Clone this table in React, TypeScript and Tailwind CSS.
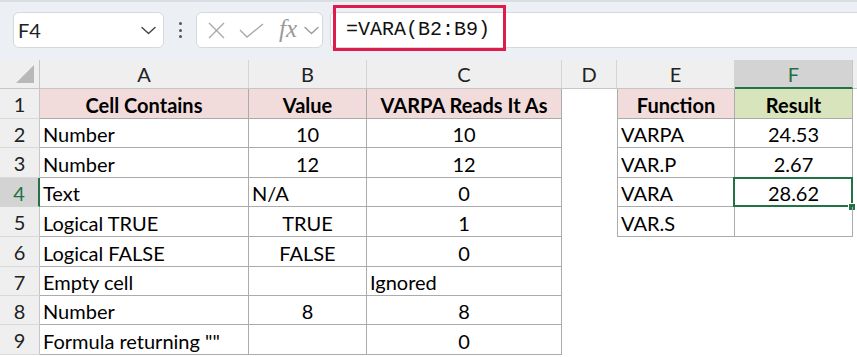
import React from "react";

type Cell = { t?: string; align?: "l" | "c"; bold?: boolean; bg?: string; border?: boolean; sel?: boolean };

const COLS = [
  { k: "A", w: "w-[209px]" },
  { k: "B", w: "w-[118px]" },
  { k: "C", w: "w-[195px]" },
  { k: "D", w: "w-[55px]" },
  { k: "E", w: "w-[118px]" },
  { k: "F", w: "w-[118px]" },
];

const ROW_H = ["h-[30px]", "h-[29px]", "h-[30px]", "h-[29px]", "h-[30px]", "h-[30px]", "h-[29px]", "h-[29px]", "h-[30px]"];

const L = (t: string): Cell => ({ t, align: "l", border: true });
const C = (t: string): Cell => ({ t, align: "c", border: true });
const H = (t: string, bg: string): Cell => ({ t, align: "c", bold: true, bg, border: true });
const N: Cell = {};

const PINK = "bg-[#f2dcdb]";
const GREEN = "bg-[#d8e4bc]";

const DATA: Cell[][] = [
  [H("Cell Contains", PINK), H("Value", PINK), H("VARPA Reads It As", PINK), N, H("Function", PINK), H("Result", GREEN)],
  [L("Number"), C("10"), C("10"), N, L("VARPA"), C("24.53")],
  [L("Number"), C("12"), C("12"), N, L("VAR.P"), C("2.67")],
  [L("Text"), L("N/A"), C("0"), N, L("VARA"), { ...C("28.62"), sel: true }],
  [L("Logical TRUE"), C("TRUE"), C("1"), N, L("VAR.S"), C("")],
  [L("Logical FALSE"), C("FALSE"), C("0"), N, N, N],
  [L("Empty cell"), C(""), L("Ignored"), N, N, N],
  [L("Number"), C("8"), C("8"), N, N, N],
  [L('Formula returning ""'), C(""), C("0"), N, N, N],
];

function Chevron({ className }: { className?: string }) {
  return (
    <svg width="15" height="9" viewBox="0 0 15 9" className={className} fill="none">
      <path d="M1 1.5 L7.5 7.5 L14 1.5" stroke="currentColor" strokeWidth="1.4" strokeLinecap="round" strokeLinejoin="round" />
    </svg>
  );
}

export default function App() {
  return (
    <div className="w-[857px] h-[357px] overflow-hidden bg-white font-['Lato',sans-serif] text-black">
      {/* formula bar */}
      <div className="h-[60px] bg-[#eceff3] border-t-[2px] border-[#dadde2] flex items-center pl-[13px] pb-[2px]">
        <div className="w-[151px] h-[36px] bg-white rounded-[6px] border border-[#d6d8dc] flex items-center justify-between pl-[4px] pr-[7px]">
          <span className="text-[20px] text-[#222] leading-none">F4</span>
          <Chevron className="text-[#444]" />
        </div>
        <div className="w-[32px] flex flex-col items-center gap-[3.5px]">
          <div className="w-[3px] h-[3px] rounded-full bg-[#555]" />
          <div className="w-[3px] h-[3px] rounded-full bg-[#555]" />
          <div className="w-[3px] h-[3px] rounded-full bg-[#555]" />
        </div>
        <div className="w-[127px] h-[36px] bg-white rounded-[6px] border border-[#d6d8dc] flex items-center pl-[11px]">
          <svg width="17" height="17" viewBox="0 0 17 17" fill="none">
            <path d="M1 1 L16 16 M16 1 L1 16" stroke="#a9a9a9" strokeWidth="1.4" />
          </svg>
          <svg width="25" height="15" viewBox="0 0 25 15" fill="none" className="ml-[14px]">
            <path d="M1 7 L8 14 L24 1" stroke="#a9a9a9" strokeWidth="1.4" />
          </svg>
          <span className="ml-[15px] font-['Liberation_Serif',serif] italic text-[25px] text-[#9a9a9a] leading-none -mt-[3px]">fx</span>
          <Chevron className="ml-[7px] text-[#9a9a9a]" />
        </div>
        <div className="relative ml-[7px] flex-1 h-[36px] bg-white border-l border-y border-[#d6d8dc] rounded-l-[4px] flex items-center pl-[15px]">
          <span className="font-['Liberation_Mono',monospace] text-[20px] leading-none text-[#111]">=VARA(B2:B9)</span>
          <div className="absolute left-[2px] -top-[8px] w-[173px] h-[46px] border-[3px] border-[#dd1c4b]" />
        </div>
      </div>

      {/* column header row */}
      <div className="flex h-[29px] bg-[#efefef] border-b border-[#c6c6c6]">
        <div className="w-[40px] border-r border-[#c6c6c6] relative">
          <svg width="20" height="20" viewBox="0 0 20 20" className="absolute right-[4px] bottom-[4px]">
            <path d="M19 1 L19 19 L1 19 Z" fill="#b8b8b8" />
          </svg>
        </div>
        {COLS.map((c) => (
          <div
            key={c.k}
            className={
              c.k === "F"
                ? `${c.w} bg-[#d3d3d3] border-r border-[#c6c6c6] border-b-[2px] border-b-[#217346] -mb-[1px] flex items-center justify-center text-[20px] text-[#1e7145]`
                : `${c.w} border-r border-[#d4d4d4] flex items-center justify-center text-[20px] text-[#222]`
            }
          >
            {c.k}
          </div>
        ))}
        <div className="flex-1" />
      </div>

      {/* data rows */}
      {DATA.map((row, ri) => {
        const selRow = ri === 3;
        return (
          <div key={ri} className={`flex ${ROW_H[ri]}`}>
            <div
              className={
                selRow
                  ? "w-[40px] bg-[#d3d3d3] border-r-[2px] border-[#217346] border-b border-b-[#d4d4d4] flex items-center justify-center text-[20px] text-[#1e7145] pt-[1px]"
                  : "w-[40px] bg-[#efefef] border-r border-[#c6c6c6] border-b border-b-[#d9d9d9] flex items-center justify-center text-[20px] text-[#222] pt-[1px]"
              }
            >
              {ri + 1}
            </div>
            {row.map((cell, ci) => {
              const col = COLS[ci];
              const isE = col.k === "E";
              const cls = [
                col.w,
                "relative flex items-center pt-[2px] text-[20px] leading-none whitespace-nowrap",
                cell.border ? "border-r border-b border-[#ababab]" : "",
                cell.border && isE ? "border-l" : "",
                !cell.border && isE && ri < 5 ? "border-l border-[#ababab]" : "",
                cell.align === "c" ? "justify-center" : "pl-[3px]",
                cell.bold ? "font-bold" : "",
                cell.bg ?? "",
              ].join(" ");
              return (
                <div key={ci} className={cls}>
                  {cell.t}
                  {cell.sel && (
                    <>
                      <div className="absolute -left-[2px] -top-[1px] -right-[1px] -bottom-[1px] border-[2px] border-[#217346]" />
                      <div className="absolute -right-[4px] -bottom-[5px] w-[8px] h-[8px] bg-[#217346] border border-white" />
                    </>
                  )}
                </div>
              );
            })}
            <div className="flex-1" />
          </div>
        );
      })}
    </div>
  );
}
